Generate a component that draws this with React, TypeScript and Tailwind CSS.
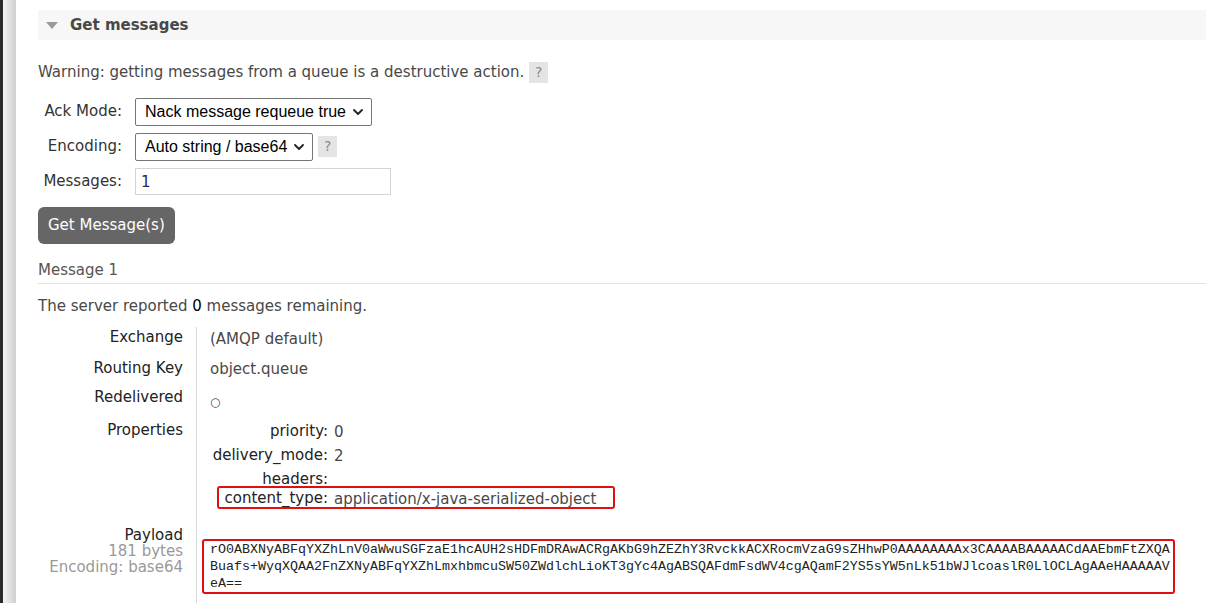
import React from 'react';

const FONT = { fontFamily: '"DejaVu Sans", Verdana, sans-serif' };

const payload =
  'rO0ABXNyABFqYXZhLnV0aWwuSGFzaE1hcAUH2sHDFmDRAwACRgAKbG9hZEZhY3RvckkACXRocmVzaG9sZHhwP0AAAAAAAAx3CAAAABAAAAACdAAEbmFtZXQA' +
  'Buafs+WyqXQAA2FnZXNyABFqYXZhLmxhbmcuSW50ZWdlchLioKT3gYc4AgABSQAFdmFsdWV4cgAQamF2YS5sYW5nLk51bWJlcoaslR0LlOCLAgAAeHAAAAAV' +
  'eA==';

const Help: React.FC = () => (
  <span className="ml-[5px] inline-flex h-[21px] w-[19px] items-center justify-center bg-[#e4e4e4] text-[14px] text-[#888]">?</span>
);

const Chevron: React.FC = () => (
  <svg viewBox="0 0 10 6" className="h-[6px] w-[10px]" fill="none" stroke="#222" strokeWidth={1.8} strokeLinecap="round" strokeLinejoin="round">
    <path d="M1 1l4 4 4-4" />
  </svg>
);

const Select: React.FC<{ label: string }> = ({ label }) => (
  <div className="flex h-[28px] items-center gap-[7px] rounded-[2px] border border-[#767676] bg-white pl-[9px] pr-[8px] text-[16px] text-black" style={{ fontFamily: '"Liberation Sans", Arial, sans-serif' }}>
    <span>{label}</span>
    <Chevron />
  </div>
);

const FormRow: React.FC<{ label: string; children: React.ReactNode }> = ({ label, children }) => (
  <div className="flex items-center">
    <div className="w-[84px] text-right text-[15px] text-[#333]">{label}</div>
    <div className="ml-[13px] flex items-center">{children}</div>
  </div>
);

const PropRow: React.FC<{ label: string; value?: string }> = ({ label, value }) => (
  <div className="flex h-[24px] items-center leading-[20px]">
    <div className="w-[118px] text-right text-[15px] text-[#222]">{label}</div>
    <div className="ml-[6px] mt-[2px] text-[15px] text-[#484848]">{value}</div>
  </div>
);

const InfoRow: React.FC<{ label: React.ReactNode; children: React.ReactNode; className?: string }> = ({ label, children, className }) => (
  <div className={`flex leading-[20px] ${className || ''}`}>
    <div className="w-[159px] shrink-0 border-r border-[#d9d9d9] pr-[13px] text-right text-[15px] text-[#222]">{label}</div>
    <div className="flex-1 pl-[13px] text-[15px] text-[#484848]">{children}</div>
  </div>
);

export default function App() {
  return (
    <div className="flex h-[603px] overflow-hidden bg-white" style={FONT}>
      <div className="w-[3px] shrink-0 bg-[#2a2a2a]" />
      <div className="w-[13px] shrink-0 bg-gradient-to-r from-[#f4f4f4] to-[#cfcfcf]" />
      <div className="flex-1 overflow-hidden rounded-tl-[10px] bg-white pl-[22px] pt-[10px]">
        {/* section header */}
        <div className="flex h-[30px] items-center bg-[#f7f7f7] pl-[8px]">
          <svg viewBox="0 0 12 7" className="h-[7px] w-[12px]">
            <path d="M0 0h12L6 7z" fill="#9a9a9a" />
          </svg>
          <span className="ml-[12px] text-[15px] font-bold text-[#484848]">Get messages</span>
        </div>

        <div className="mt-[21px] flex items-center text-[15px] text-[#484848]">
          <span>Warning: getting messages from a queue is a destructive action.</span>
          <Help />
        </div>

        <div className="mt-[14px] flex flex-col gap-[7px]">
          <FormRow label="Ack Mode:">
            <Select label="Nack message requeue true" />
          </FormRow>
          <FormRow label="Encoding:">
            <Select label="Auto string / base64" />
            <Help />
          </FormRow>
          <FormRow label="Messages:">
            <div className="h-[27px] w-[256px] border border-[#d4d4d4] bg-white pl-[5px] pt-[2px] text-[15px] text-[#2b2860]">1</div>
          </FormRow>
        </div>

        <button className="mt-[12px] h-[37px] rounded-[6px] bg-[#666] px-[10px] text-[15px] text-white">Get Message(s)</button>

        <div className="mt-[15px] border-b border-[#e2e2e2] pb-[2px] text-[15px] text-[#555]">Message 1</div>

        <div className="mt-[12px] text-[15px] leading-[20px] text-[#484848]">
          The server reported <span className="text-black">0</span> messages remaining.
        </div>

        <div className="mt-[11px] flex flex-col">
          <InfoRow label="Exchange" className="h-[31px]">
            <div className="pt-[2px]">(AMQP default)</div>
          </InfoRow>
          <InfoRow label="Routing Key" className="h-[29px]">
            <div className="pt-[1px]">object.queue</div>
          </InfoRow>
          <InfoRow label="Redelivered" className="h-[33px]">
            <div className="pt-[5px] text-[12px]">○</div>
          </InfoRow>
          <InfoRow label="Properties" className="h-[95px]">
            <div className="-mt-[1px] flex flex-col">
              <PropRow label="priority:" value="0" />
              <PropRow label="delivery_mode:" value="2" />
              <PropRow label="headers:" />
              <div className="relative -mt-[5px]">
                <PropRow label="content_type:" value="application/x-java-serialized-object" />
                <div className="absolute left-[7px] top-[0px] h-[23px] w-[398px] rounded-[3px] border-2 border-[#e01010]" />
              </div>
            </div>
          </InfoRow>
          <InfoRow
            className="h-[89px]"
            label={
              <div className="pt-[12px] leading-[16px]">
                <div>Payload</div>
                <div className="text-[#999]">181 bytes</div>
                <div className="text-[#999]">Encoding: base64</div>
              </div>
            }
          >
            <div className="-ml-[8px] mt-[24px] w-[973px] rounded-[3px] border-2 border-[#e01010] px-[6px]">
              <div
                className="w-[120ch] whitespace-pre-wrap break-all text-[13.333px] leading-[17px] text-[#222]"
                style={{ fontFamily: '"Liberation Mono", "Courier New", monospace' }}
              >
                {payload}
              </div>
            </div>
          </InfoRow>
        </div>
      </div>
    </div>
  );
}
